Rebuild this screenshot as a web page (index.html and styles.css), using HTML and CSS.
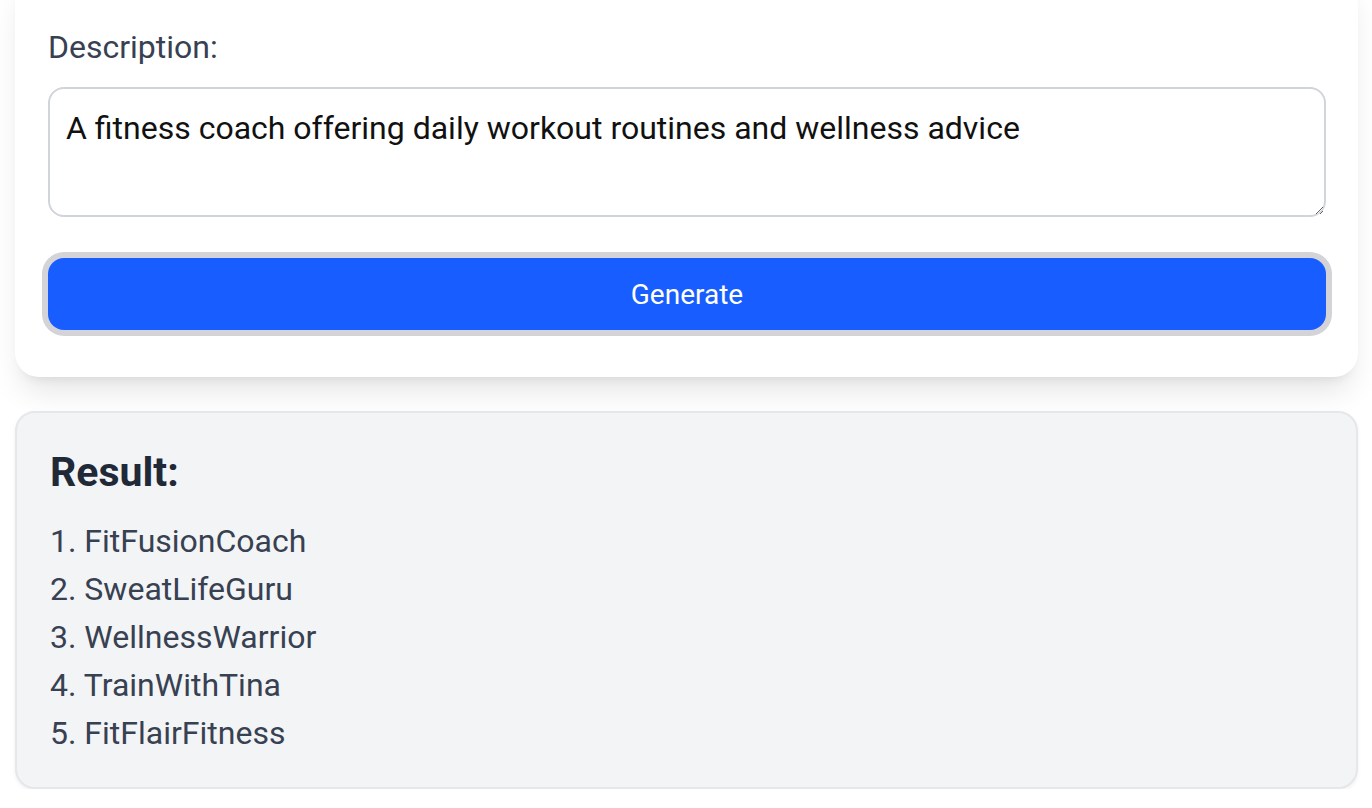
FILE: index.html
```html
<!DOCTYPE html>
<html lang="en">
<head>
    <meta charset="UTF-8">
    <meta name="viewport" content="width=device-width, initial-scale=1.0">
    <title>Username Generator</title>
    <link rel="stylesheet" href="styles.css">
</head>
<body>

<div class="page">
    <!-- Form card (top of it is scrolled out of view) -->
    <form class="card" id="generatorForm">
        <label class="label" for="description">Description:</label>
        <textarea id="description" name="description">A fitness coach offering daily workout routines and wellness advice</textarea>

        <button type="submit" class="generate">Generate</button>
    </form>

    <div class="result" id="resultOutput">
        <h3>Result:</h3>
        <div class="result-list">
            <div>1. FitFusionCoach</div>
            <div>2. SweatLifeGuru</div>
            <div>3. WellnessWarrior</div>
            <div>4. TrainWithTina</div>
            <div>5. FitFlairFitness</div>
        </div>
    </div>
</div>

</body>
</html>
```

FILE: styles.css
```css
body {
    font-family: Roboto, "Liberation Sans", Arial, sans-serif;
    background-color: #ffffff;
    color: #374151;
    margin: 0;
    padding: 0;
    overflow: hidden;
}

.page {
    padding: 0 14px 0 15px;
}

.card {
    display: flex;
    flex-direction: column;
    background-color: #ffffff;
    border-radius: 0 0 24px 24px;
    box-shadow: 0 20px 30px -6px rgba(0, 0, 0, 0.1), 0 8px 12px -8px rgba(0, 0, 0, 0.1);
    margin-top: -25px;
    padding: 48px 32px 47px 33px;
}

.label {
    font-size: 32px;
    line-height: 48px;
    color: #374151;
    margin-bottom: 16px;
}

textarea {
    font-family: Roboto, "Liberation Sans", Arial, sans-serif;
    font-size: 32px;
    line-height: 48px;
    color: #111111;
    height: 130px;
    padding: 15px 16px;
    border: 2px solid #d1d5db;
    border-radius: 16px;
    box-sizing: border-box;
    width: 100%;
    margin: 0 0 41px 0;
    resize: vertical;
    outline: none;
}

.generate {
    height: 72px;
    width: 100%;
    border: none;
    border-radius: 16px;
    background-color: #185dff;
    color: #ffffff;
    font-family: Roboto, "Liberation Sans", Arial, sans-serif;
    font-size: 28px;
    font-weight: 400;
    box-shadow: 0 0 0 6px #d3d3d8;
    cursor: pointer;
}

.result {
    margin-top: 34px;
    background-color: #f3f4f6;
    border: 2px solid #e5e7eb;
    border-radius: 20px;
    box-shadow: 0 2px 4px rgba(0, 0, 0, 0.06);
    padding: 32px 32px 30px 33px;
}

.result h3 {
    margin: 0 0 18px 0;
    font-size: 41px;
    line-height: 54px;
    font-weight: 700;
    color: #1f2937;
}

.result-list {
    font-size: 32px;
    line-height: 48px;
    color: #374151;
}
```
